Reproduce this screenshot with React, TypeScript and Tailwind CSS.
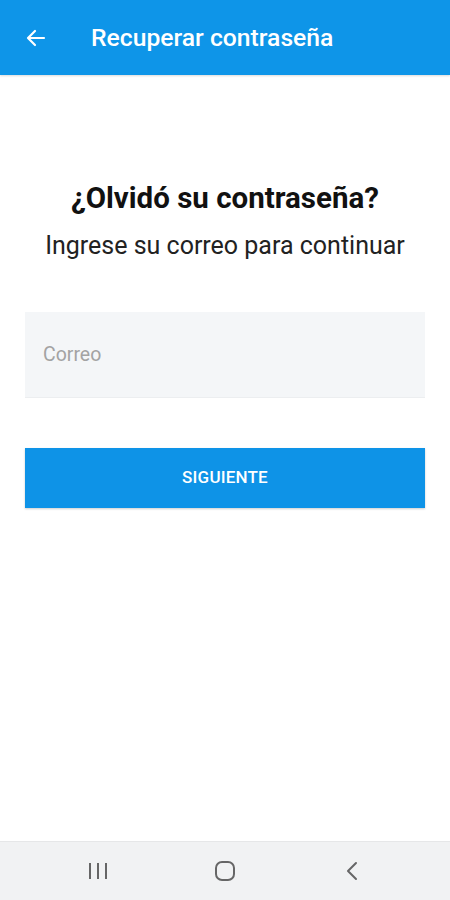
import React from 'react';

export default function App() {
  return (
    <div className="w-[450px] h-[900px] flex flex-col bg-white font-['Roboto',sans-serif]">
      {/* app bar */}
      <div className="h-[75px] shrink-0 bg-[#0e95e8] flex items-center pl-[24px] shadow-[0_1px_2px_rgba(0,0,0,0.15)]">
        <svg width="24" height="24" viewBox="0 0 24 24" fill="none" stroke="white" strokeWidth="2.2" strokeLinecap="round" strokeLinejoin="round">
          <path d="M20 12H4.5M11 5l-7 7 7 7" />
        </svg>
        <span className="ml-[43px] text-white text-[24.7px] font-medium">Recuperar contraseña</span>
      </div>

      <div className="flex-1 flex flex-col px-[25px]">
        <h1 className="mt-[105px] text-center text-[29.5px] leading-[36px] font-bold text-[#111]">¿Olvidó su contraseña?</h1>
        <p className="mt-[15px] text-center text-[25px] leading-[30px] text-[#222]">Ingrese su correo para continuar</p>

        <div className="mt-[51px] h-[86px] bg-[#f4f6f8] border-b border-[#eceef0] flex items-center px-[18px]">
          <span className="text-[19.5px] text-[#a3a3a3]">Correo</span>
        </div>

        <button className="mt-[50px] h-[60px] bg-[#0e93e7] text-white text-[17px] font-medium tracking-[0.2px] shadow-[0_1px_2px_rgba(0,0,0,0.2)]">
          SIGUIENTE
        </button>
      </div>

      {/* system nav bar */}
      <div className="h-[59px] shrink-0 bg-[#f1f2f3] border-t border-[#e6e7e8] flex items-center justify-center gap-[87px]">
        <div className="w-[40px] flex justify-center">
          <svg width="22" height="20" viewBox="0 0 22 20" fill="none" stroke="#666" strokeWidth="2">
            <path d="M3 2v16M11 2v16M19 2v16" />
          </svg>
        </div>
        <div className="w-[40px] flex justify-center">
          <svg width="22" height="22" viewBox="0 0 22 22" fill="none" stroke="#666" strokeWidth="2">
            <rect x="2" y="2" width="18" height="18" rx="6" />
          </svg>
        </div>
        <div className="w-[40px] flex justify-center">
          <svg width="14" height="20" viewBox="0 0 14 20" fill="none" stroke="#666" strokeWidth="2" strokeLinecap="round" strokeLinejoin="round">
            <path d="M11 2L3 10l8 8" />
          </svg>
        </div>
      </div>
    </div>
  );
}
